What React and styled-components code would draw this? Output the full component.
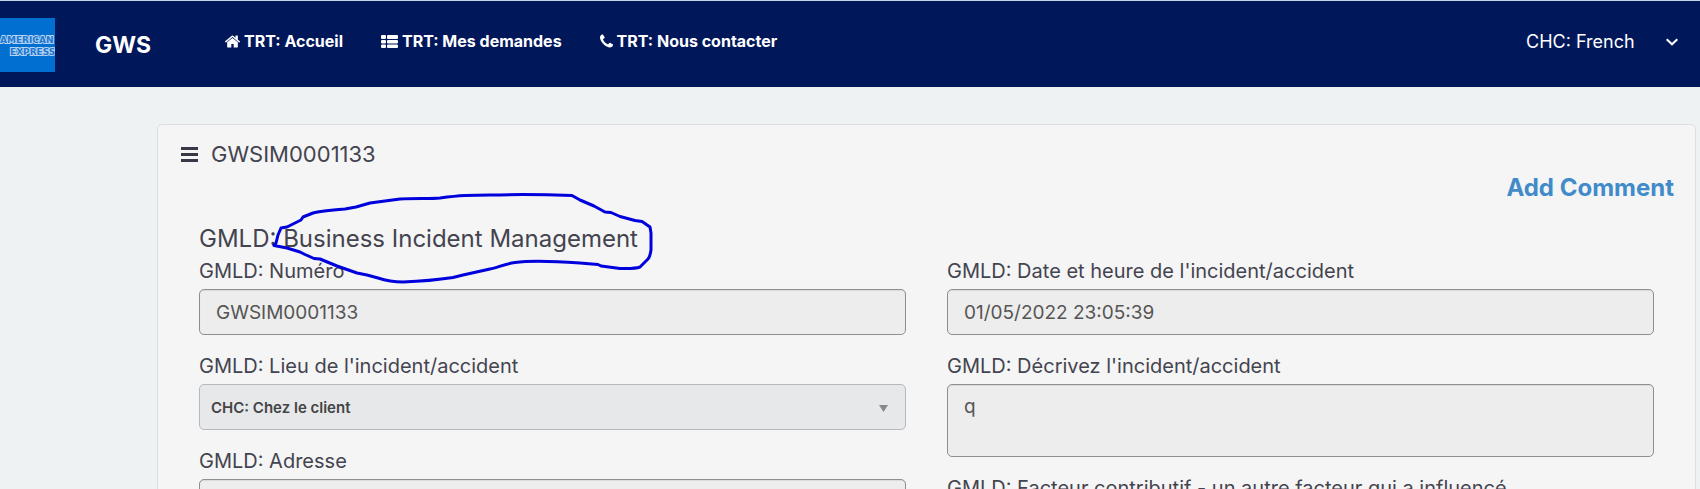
import React, { useState } from 'react';
import styled, { createGlobalStyle } from 'styled-components';

const colors = {
  navy: '#00175a',
  blue: '#016fd0',
  link: '#428bca',
  text: '#43444f',
  ink: '#0000dd',
  page: '#eef2f3',
  card: '#f5f5f5',
};

const HomeIcon = () => (
  <svg width="15" height="17" viewBox="89 0 1614 1792" fill="currentColor" aria-hidden="true">
    <path d="M1472 992v480q0 26-19 45t-45 19h-384v-384h-256v384h-384q-26 0-45-19t-19-45v-480q0-1 .5-3t.5-3l575-474 575 474q1 2 1 6zm223-69l-62 74q-8 9-21 11h-3q-13 0-21-7l-692-577-692 577q-12 8-24 7-13-2-21-11l-62-74q-8-10-7-23.5t11-21.5l719-599q32-26 76-26t76 26l244 204v-195q0-14 9-23t23-9h192q14 0 23 9t9 23v408l219 182q10 8 11 21.5t-7 23.5z" />
  </svg>
);

const ListIcon = () => (
  <svg width="17" height="17" viewBox="0 0 17 17" fill="currentColor" aria-hidden="true">
    <rect x="0" y="2" width="5" height="4" rx="1" />
    <rect x="6" y="2" width="11" height="4" rx="1" />
    <rect x="0" y="7" width="5" height="3.500" rx="1" />
    <rect x="6" y="7" width="11" height="3.500" rx="1" />
    <rect x="0" y="11.500" width="5" height="3.500" rx="1" />
    <rect x="6" y="11.500" width="11" height="3.500" rx="1" />
  </svg>
);

const PhoneIcon = () => (
  <svg width="13" height="17" viewBox="192 0 1408 1792" fill="currentColor" aria-hidden="true">
    <path d="M1600 1240q0 27-10 70.5t-21 68.5q-21 50-122 106-94 51-186 51-27 0-53-3.5t-57.5-12.5-47-14.5-55.5-20.5-49-18q-98-35-175-83-127-79-264-216t-216-264q-48-77-83-175-3-9-18-49t-20.5-55.5-14.5-47-12.5-57.5-3.5-53q0-92 51-186 56-101 106-122 25-11 68.5-21t70.5-10q14 0 21 3 18 6 53 76 11 19 30 54t35 63.5 31 53.5q3 4 17.5 25t21.5 35.5 7 28.5q0 20-28.5 50t-62 55-62 53-28.5 46q0 9 5 22.5t8.5 20.5 14 24 11.5 19q76 137 174 235t235 174q2 1 19 11.5t24 14 20.5 8.5 22.5 5q18 0 46-28.5t53-62 55-62 50-28.5q14 0 28.5 7t35.5 21.5 25 17.5q25 15 53.5 31t63.5 35 54 30q70 35 76 53 3 7 3 21z" />
  </svg>
);

const links = [
  { label: 'TRT: Accueil', Icon: HomeIcon },
  { label: 'TRT: Mes demandes', Icon: ListIcon },
  { label: 'TRT: Nous contacter', Icon: PhoneIcon },
];

function Header() {
  return (
    <HeaderBar>
      <Logo viewBox="0 0 55 54" role="img" aria-label="American Express">
        <rect width="55" height="54" fill={colors.blue} />
        <text x="0" y="25">AMERICAN</text>
        <text x="10" y="37">EXPRESS</text>
      </Logo>
      <Brand href="#">GWS</Brand>
      <Nav>
        {links.map(({ label, Icon }) => (
          <NavLink key={label} href="#">
            <Icon />
            {label}
          </NavLink>
        ))}
      </Nav>
      <Language>
        <select aria-label="Langue" defaultValue="fr">
          <option value="fr">CHC: French</option>
        </select>
        <svg width="12" height="8" viewBox="0 0 12 8" aria-hidden="true">
          <path d="M.7 1.200 6 6.300 11.300 1.200" fill="none" stroke="#fff" strokeWidth="2" />
        </svg>
      </Language>
    </HeaderBar>
  );
}

function Field({ id, label, children }) {
  return (
    <FieldBox>
      <Label htmlFor={id}>{label}</Label>
      {children}
    </FieldBox>
  );
}

export default function App() {
  const [address, setAddress] = useState('');

  return (
    <>
      <GlobalStyle />
      <Header />
      <Card>
        <Top>
          <MenuButton type="button" aria-label="Menu">
            <svg width="17" height="15" viewBox="0 0 17 15" fill="currentColor">
              <path d="M0 0h17v3H0zM0 6h17v3H0zM0 12h17v3H0z" />
            </svg>
          </MenuButton>
          <RecordNumber>GWSIM0001133</RecordNumber>
        </Top>
        <Actions>
          <CommentLink href="#">Add Comment</CommentLink>
        </Actions>
        <Form>
          <Title>GMLD: Business Incident Management</Title>
          <Columns>
            <Column>
              <Field id="number" label="GMLD: Numéro">
                <Input id="number" value="GWSIM0001133" readOnly />
              </Field>
              <Field id="place" label="GMLD: Lieu de l'incident/accident">
                <SelectBox>
                  <select id="place" defaultValue="client">
                    <option value="client">CHC: Chez le client</option>
                  </select>
                  <svg width="9" height="7" viewBox="0 0 9 7" aria-hidden="true">
                    <path d="M0 0h9L4.500 7z" fill="#888" />
                  </svg>
                </SelectBox>
              </Field>
              <Field id="address" label="GMLD: Adresse">
                <Input id="address" value={address} onChange={e => setAddress(e.target.value)} />
              </Field>
            </Column>
            <Column>
              <Field id="date" label="GMLD: Date et heure de l'incident/accident">
                <Input id="date" value="01/05/2022 23:05:39" readOnly />
              </Field>
              <Field id="description" label="GMLD: Décrivez l'incident/accident">
                <TextArea id="description" value="q" readOnly />
              </Field>
              <Field id="factor" label="GMLD: Facteur contributif - un autre facteur qui a influencé">
                <Input id="factor" readOnly />
              </Field>
            </Column>
          </Columns>
          <Marker viewBox="270 190 385 96" aria-hidden="true">
            <path d="M274 245 L276 243 278 235 281 228 287 227 301 220 303 217 313 213 Q320 211 345 209 L356 207 370 203 Q385 201 400 199 C415 198 430 199 440 198 Q455 196 465 195.500 L490 195 Q530 194 572 195.500 L580 200 594 206 605 212 611 212.500 620 216.500 635 220.500 642 221.500 650 227 651 233 651 250 Q650 257 648 259 L640 267 Q635 269 620 268.500 L605 266.500 601 266 598 264.500 580 263 Q535 260 515 262.500 C504 264 497 268 490 269 L463 275 453 277.500 Q430 281 403 282 Q390 282 378 278 L367 275 357 273 337 266 320 259 314 258.500 305 254.500 300 252 287 248 274 245.500" />
          </Marker>
        </Form>
      </Card>
    </>
  );
}

const GlobalStyle = createGlobalStyle`
  * {
    box-sizing: border-box;
  }
  body {
    margin: 0;
    background: ${colors.page};
    color: ${colors.text};
    font-family: Inter, "Liberation Sans", sans-serif;
  }
  input, select, textarea, button {
    font-family: inherit;
  }
`;

const HeaderBar = styled.header`
  display: flex;
  align-items: flex-start;
  height: 87px;
  border-top: 1px solid #c5d3e8;
  background: ${colors.navy};
  color: #fff;
`;
const Logo = styled.svg`
  width: 55px;
  height: 54px;
  margin-top: 17px;
  text {
    font: bold 9px "DejaVu Sans", sans-serif;
    fill: #1c77d0;
    stroke: #b4d4f2;
    stroke-width: 2px;
    paint-order: stroke;
  }
`;
const Brand = styled.a`
  margin: 28px 0 0 40px;
  color: inherit;
  font-size: 23px;
  font-weight: bold;
  line-height: 32px;
  text-decoration: none;
`;
const Nav = styled.nav`
  display: flex;
  gap: 38px;
  margin: 28px 0 0 74px;
`;
const NavLink = styled.a`
  display: flex;
  align-items: center;
  gap: 4px;
  color: inherit;
  font-size: 16px;
  font-weight: bold;
  line-height: 24px;
  text-decoration: none;
`;
const Language = styled.div`
  position: relative;
  margin: 28px 22px 0 auto;
  select {
    appearance: none;
    display: block;
    padding: 0 43px 0 0;
    border: 0;
    background: transparent;
    color: #fff;
    font-size: 18px;
    line-height: 26px;
  }
  svg {
    position: absolute;
    top: 9px;
    right: 0;
    pointer-events: none;
  }
`;
const Card = styled.main`
  margin: 37px 4px 0 157px;
  padding: 14px 0 40px;
  border: 1px solid #dcdedf;
  border-radius: 5px;
  background: ${colors.card};
`;
const Top = styled.div`
  display: flex;
  align-items: center;
  gap: 13px;
  height: 30px;
  padding-left: 23px;
`;
const MenuButton = styled.button`
  display: flex;
  padding: 0;
  border: 0;
  background: none;
  color: #383947;
`;
const RecordNumber = styled.span`
  font-size: 22px;
  font-weight: 380;
`;
const Actions = styled.div`
  display: flex;
  justify-content: flex-end;
  padding-right: 21px;
`;
const CommentLink = styled.a`
  color: ${colors.link};
  font-size: 24px;
  font-weight: bold;
  line-height: 38px;
  text-decoration: none;
`;
const Form = styled.form`
  position: relative;
  margin: 14px 41px 0;
`;
const Title = styled.h1`
  margin: 0;
  font-size: 24px;
  font-weight: 380;
  line-height: 36px;
`;
const Columns = styled.div`
  display: grid;
  grid-template-columns: 1fr 1fr;
  gap: 41px;
`;
const Column = styled.div`
  display: flex;
  flex-direction: column;
  gap: 17px;
`;
const FieldBox = styled.div`
  display: flex;
  flex-direction: column;
  gap: 4px;
`;
const Label = styled.label`
  font-size: 20px;
  font-weight: 380;
  line-height: 28px;
`;
const Input = styled.input`
  width: 100%;
  height: 46px;
  padding: 0 16px;
  border: 1px solid #8f8f8f;
  border-radius: 5px;
  background: #ededed;
  box-shadow: inset 0 1px 1px rgba(0, 0, 0, 0.08);
  color: #555;
  font-size: 19px;
  font-weight: 380;
`;
const TextArea = styled(Input).attrs({ as: 'textarea' })`
  display: block;
  height: 73px;
  padding: 10px 16px;
  line-height: 24px;
  resize: none;
`;
const SelectBox = styled.div`
  position: relative;
  select {
    appearance: none;
    display: block;
    width: 100%;
    height: 46px;
    padding: 0 40px 0 11px;
    border: 1px solid #b5b9be;
    border-radius: 5px;
    background: #e6e8ea;
    color: #444;
    font-size: 15px;
    font-weight: 600;
  }
  svg {
    position: absolute;
    top: 21px;
    right: 18px;
    pointer-events: none;
  }
`;
// hand-drawn loop round the form title
const Marker = styled.svg`
  position: absolute;
  top: -31px;
  left: 71px;
  width: 385px;
  height: 96px;
  pointer-events: none;
  path {
    fill: none;
    stroke: ${colors.ink};
    stroke-width: 3px;
    stroke-linecap: round;
    stroke-linejoin: round;
  }
`;
